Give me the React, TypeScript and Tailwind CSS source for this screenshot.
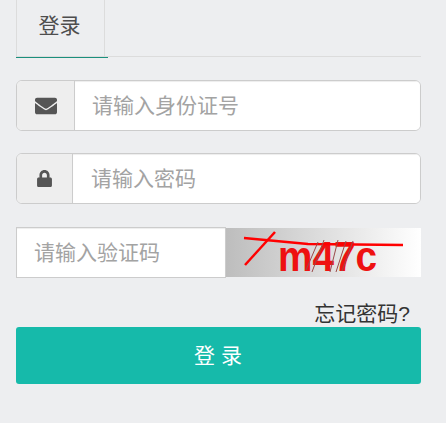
import { FaEnvelope, FaLock } from "react-icons/fa";

const fontStack = "font-['Liberation_Sans','Noto_Sans_CJK_SC',sans-serif]";

export default function App() {
  return (
    <div className={`h-[423px] w-[446px] overflow-hidden bg-[#edeef0] pl-4 pr-[25px] ${fontStack}`}>
      {/* tabs */}
      <div className="flex h-[57px] border-b border-[#dcdcdc]">
        <div className="relative flex h-[57px] w-[89px] items-center justify-center border-x border-[#dcdcdc] pb-[5px] pr-[2px] text-[21px] text-[#4d4d4d]">
          登录
          <div className="absolute -bottom-px -left-px h-[1px] w-[92px] bg-[#1b8f7d]" />
        </div>
      </div>

      {/* id */}
      <div className="mt-[23px] flex h-[51px] overflow-hidden rounded-[6px] border border-[#cccccc] bg-white">
        <div className="flex w-[58px] shrink-0 items-center justify-center border-r border-[#cccccc] bg-[#eeeeee] text-[#555555]">
          <FaEnvelope className="h-[22px] w-[22px]" />
        </div>
        <input
          className="min-w-0 flex-1 bg-white pl-[17px] text-[21px] shadow-[inset_0_1px_1px_rgba(0,0,0,0.075)] outline-none placeholder:text-[#a3a3a3]"
          placeholder="请输入身份证号"
        />
      </div>

      {/* password */}
      <div className="mt-[22px] flex h-[51px] overflow-hidden rounded-[6px] border border-[#cccccc] bg-white">
        <div className="flex w-[56px] shrink-0 items-center justify-center border-r border-[#cccccc] bg-[#eeeeee] text-[#555555]">
          <FaLock className="h-[17px] w-[15px]" />
        </div>
        <input
          className="min-w-0 flex-1 bg-white pl-[18px] text-[21px] shadow-[inset_0_1px_1px_rgba(0,0,0,0.075)] outline-none placeholder:text-[#a3a3a3]"
          placeholder="请输入密码"
        />
      </div>

      {/* captcha */}
      <div className="mt-[23px] flex h-[51px]">
        <input
          className="w-[210px] border border-[#cccccc] bg-white pl-[17px] text-[21px] shadow-[inset_0_1px_1px_rgba(0,0,0,0.075)] outline-none placeholder:text-[#a3a3a3]"
          placeholder="请输入验证码"
        />
        <div className="mt-px h-[49px] w-[195px] bg-gradient-to-r from-[#bdbdbd] via-[#dedede] to-white">
          <svg viewBox="0 0 195 49" className="h-full w-full overflow-visible">
            <text
              x="52"
              y="43"
              fontFamily="'Liberation Sans', sans-serif"
              fontWeight="700"
              fontSize="42"
              textLength="99"
              lengthAdjust="spacingAndGlyphs"
              fill="#ee1111"
            >
              m47c
            </text>
            <path d="M18 10 L82 16 L177 17" stroke="#ff0000" strokeWidth="2.5" fill="none" />
            <path d="M49 4 L19 37" stroke="#ff0000" strokeWidth="2.5" fill="none" />
            <path d="M92 14 L80 42 M98 12 L86 44 M112 12 L104 44 M120 13 L110 44 M127 13 L116 43" stroke="#9a4a4a" strokeWidth="1" fill="none" />
          </svg>
        </div>
      </div>

      {/* forgot */}
      <div className="mt-[25px] flex h-[22px] items-center justify-end pr-[11px] text-[21px] leading-[22px] text-[#333333]">
        忘记密码?
      </div>

      <button className="mt-[2px] flex h-[57px] w-full items-center justify-center rounded-[3px] bg-[#16baaa] pr-[1px] text-[21px] text-white">
        登 录
      </button>
    </div>
  );
}
